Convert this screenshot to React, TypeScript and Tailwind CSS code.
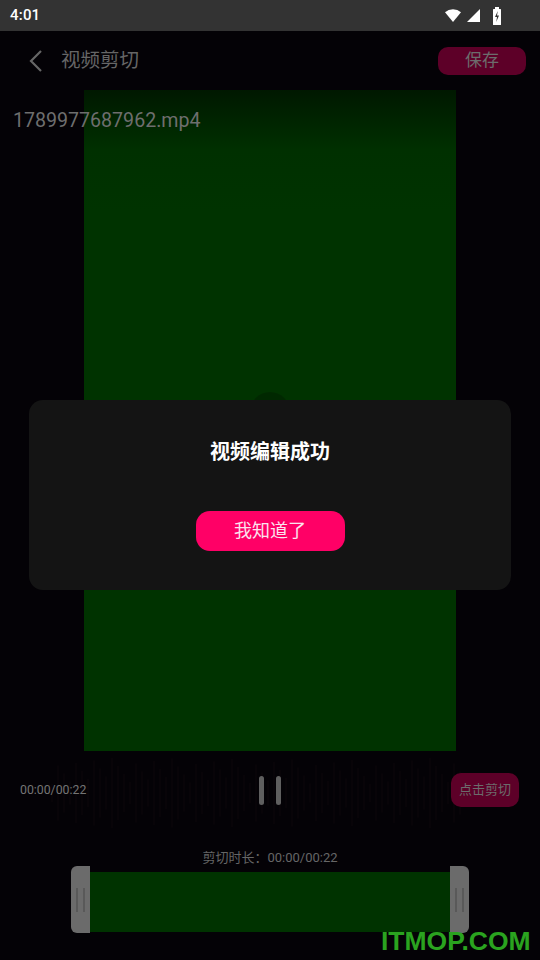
import React from "react";

const bars = Array.from({ length: 70 }, (_, i) => {
  const h = 18 + ((i * 37) % 53);
  return { x: 52 + i * 6, h };
});

function StatusBar() {
  return (
    <div className="h-[31px] bg-[#333333] flex items-center px-[10px] text-white">
      <span className="text-[15px] font-medium font-['Roboto',sans-serif] tracking-[0.2px]">4:01</span>
      <div className="ml-auto flex items-center gap-[6px] pr-[28px]">
        <svg width="16" height="13" viewBox="0 0 16 13">
          <path d="M8 13 L0 3.2 A12 12 0 0 1 16 3.2 Z" fill="#fff" />
        </svg>
        <svg width="13" height="13" viewBox="0 0 13 13">
          <path d="M13 0 V13 H0 Z" fill="#fff" />
        </svg>
        <svg width="10" height="18" viewBox="0 0 10 18" className="ml-[6px]">
          <rect x="3" y="0" width="4" height="2" fill="#fff" />
          <rect x="1" y="2" width="8" height="16" rx="0.5" fill="#fff" />
          <path d="M5.8 4 L3 10 H5 L4.2 15 L7 8.5 H5 Z" fill="#333" />
        </svg>
      </div>
    </div>
  );
}

export default function App() {
  return (
    <div className="relative w-[540px] h-[960px] overflow-hidden bg-[#040206] font-['Roboto','Noto_Sans_CJK_SC',sans-serif]">
      <StatusBar />

      <div className="h-[59px] flex items-center pl-[28px] pr-[14px]">
        <svg width="16" height="24" viewBox="0 0 16 24">
          <path d="M13 2 L3 12 L13 22" stroke="#666" strokeWidth="2.2" fill="none" />
        </svg>
        <span className="ml-[17px] text-[19.5px] text-[#666666] leading-none">视频剪切</span>
        <button className="ml-auto w-[88px] h-[28px] rounded-[10px] bg-[#5d0028] text-[17px] text-[#6c6c6c] leading-none">
          保存
        </button>
      </div>

      <div className="relative h-[661px] flex justify-center">
        <div className="w-[372px] h-full bg-[linear-gradient(to_bottom,#001800_0px,#003000_60px,#003300_120px,#003300_100%)]" />
        <span className="absolute left-[13px] top-[19px] text-[19.6px] text-[#6e6e6e] leading-[24px]">
          1789977687962.mp4
        </span>
        <div className="absolute left-[250px] top-[302px] w-[40px] h-[40px] rounded-full bg-black/20" />
      </div>

      <div className="relative h-[78px] grid grid-cols-[1fr_auto_1fr] items-center">
        <svg className="absolute left-0 top-[4px]" width="540" height="76" viewBox="0 0 540 76">
          {bars.map((b) => (
            <line key={b.x} x1={b.x} x2={b.x} y1={38 - b.h / 2} y2={38 + b.h / 2} stroke="#080408" strokeWidth="2" />
          ))}
        </svg>
        <span className="relative pl-[20px] text-[12.3px] text-[#747474]">00:00/00:22</span>
        <div className="relative flex gap-[12px]">
          <div className="w-[5px] h-[29px] rounded-full bg-[#5f5f5f]" />
          <div className="w-[5px] h-[29px] rounded-full bg-[#5f5f5f]" />
        </div>
        <div className="relative flex justify-end pr-[21px]">
          <button className="w-[68px] h-[34px] rounded-[10px] bg-[#5d0028] text-[13px] text-[#6c6c6c]">
            点击剪切
          </button>
        </div>
      </div>

      <div className="mt-[20px] h-[17px] flex items-center justify-center text-[13px] text-[#666666] leading-none">
        剪切时长：00:00/00:22
      </div>

      <div className="flex justify-center">
        <div className="w-[19px] h-[67px] rounded-l-[6px] bg-[#6b6b6b] flex justify-center items-center gap-[5px]">
          <div className="w-[2px] h-[24px] bg-[#595959]" />
          <div className="w-[2px] h-[24px] bg-[#595959]" />
        </div>
        <div className="w-[360px] h-[60px] mt-[6px] bg-[#003300]" />
        <div className="w-[19px] h-[67px] rounded-r-[6px] bg-[#6b6b6b] flex justify-center items-center gap-[5px]">
          <div className="w-[2px] h-[24px] bg-[#595959]" />
          <div className="w-[2px] h-[24px] bg-[#595959]" />
        </div>
      </div>

      <div className="absolute left-[29px] top-[400px] w-[482px] h-[190px] rounded-[14px] bg-[#141414] flex flex-col items-center">
        <div className="mt-[40px] text-[20px] font-bold text-white leading-[24px]">视频编辑成功</div>
        <button className="mt-[47px] w-[149px] h-[40px] rounded-[14px] bg-[#ff0066] text-[18px] text-[#fbe3ee] leading-none">
          我知道了
        </button>
      </div>

      <div className="absolute left-[381px] top-[926px] text-[26.5px] font-bold text-[#2aa31f] leading-[30px] font-['Liberation_Sans',sans-serif]">
        ITMOP.COM
      </div>
    </div>
  );
}
